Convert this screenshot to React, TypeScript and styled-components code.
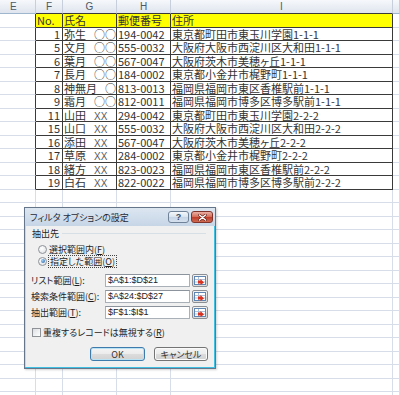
import React, { FC } from 'react';
import styled, { createGlobalStyle } from 'styled-components';

const JP = `'Noto Sans CJK JP', 'Noto Sans', sans-serif`;
const GRID = '#d8dee9';
const INK = '#3a3a3a';
const TEXT = '#333';

const GlobalStyle = createGlobalStyle`
  html, body {
    margin: 0;
    padding: 0;
    background: #fff;
  }
  body {
    overflow: hidden;
  }
`;

const Screen = styled.div`
  position: relative;
  width: 400px;
  height: 395px;
  overflow: hidden;
  background: #fff;
  font-family: ${JP};
  font-feature-settings: 'palt';
`;

/* ---------- sheet ---------- */

const Sheet = styled.div`
  display: flex;
  flex-direction: column;
`;

const SheetRow = styled.div<{ $h: number }>`
  display: grid;
  grid-template-columns: 36px 27px 54px 54px 222px 1fr;
  height: ${p => p.$h}px;
  line-height: ${p => p.$h - 1}px;
  flex: none;
`;

const ColHead = styled.div<{ $boxed?: boolean; $left?: boolean }>`
  box-sizing: border-box;
  border-right: 1px solid #c6cfdb;
  border-bottom: 1px solid ${p => (p.$boxed ? INK : '#9eb6ce')};
  background: linear-gradient(#f6f8fb, #dfe5ee);
  color: #4d5866;
  font-family: 'Liberation Sans', sans-serif;
  font-size: 10px;
  line-height: 13px;
  text-align: ${p => (p.$left ? 'left' : 'center')};
  padding-left: ${p => (p.$left ? '10px' : '0')};
`;

type Tone = 'grid' | 'box' | 'edge';

const Cell = styled.div<{ $tone: Tone; $fill?: boolean; $right?: boolean }>`
  box-sizing: border-box;
  overflow: hidden;
  white-space: nowrap;
  padding: 0 2px 0 1px;
  border-right: 1px solid ${p => (p.$tone === 'grid' ? GRID : INK)};
  border-bottom: 1px solid ${p => (p.$tone === 'box' ? INK : GRID)};
  background: ${p => (p.$fill ? '#ffff00' : 'transparent')};
  color: ${TEXT};
  font-size: 11px;
  text-align: ${p => (p.$right ? 'right' : 'left')};
`;

const Mark = styled.span<{ $latin?: boolean }>`
  margin-left: 8px;
  color: ${p => (p.$latin ? '#5a5a5a' : TEXT)};
  font-family: ${p => (p.$latin ? `'Liberation Sans', sans-serif` : JP)};
  font-size: ${p => (p.$latin ? '10px' : '11px')};
`;

/* ---------- dialog ---------- */

const Dialog = styled.div`
  position: absolute;
  left: 24px;
  top: 207px;
  width: 192px;
  height: 162px;
  box-sizing: border-box;
  display: flex;
  flex-direction: column;
  border: 1px solid #66768a;
  background: #f0f0f0;
  box-shadow: inset -1px -1px 0 #3fc0e3, inset 1px 0 0 #c9d7e6, 1px 1px 2px rgba(0, 0, 0, 0.18);
  color: #1e1e1e;
  font-size: 9px;
`;

const TitleBar = styled.div`
  flex: none;
  height: 18px;
  display: flex;
  align-items: center;
  gap: 2px;
  padding: 0 2px 0 5px;
  background: linear-gradient(#dce6f1, #c6d5e6);
`;

const Title = styled.span`
  flex: 1;
  color: #1f2b3a;
  font-size: 9px;
`;

const CapButton = styled.div<{ $close?: boolean }>`
  box-sizing: border-box;
  width: ${p => (p.$close ? 22 : 21)}px;
  height: 12px;
  display: flex;
  align-items: center;
  justify-content: center;
  border: 1px solid ${p => (p.$close ? '#80332a' : '#6f8298')};
  border-radius: 3px;
  background: ${p =>
    p.$close
      ? 'linear-gradient(#eab0a4, #d56a55 50%, #bd3b2a 51%, #cf6a50)'
      : 'linear-gradient(#f4f7fb, #d9e3ef 50%, #c5d4e6 51%, #d5e0ed)'};
  color: #3a4b5f;
  font-family: 'Liberation Sans', sans-serif;
  font-size: 9px;
  font-weight: bold;
`;

const Body = styled.div`
  flex: 1;
  display: flex;
  flex-direction: column;
  padding: 0 6px;
`;

const GroupLabel = styled.div`
  margin-top: 1px;
  height: 13px;
  display: flex;
  align-items: center;
  gap: 3px;
  padding-left: 1px;

  &::after {
    content: '';
    flex: 1;
    margin-right: 3px;
    border-top: 1px solid #d6dfe6;
  }
`;

const RadioRow = styled.label<{ $gap: number }>`
  margin-top: ${p => p.$gap}px;
  height: 12px;
  display: flex;
  align-items: center;
  gap: 2px;
  padding-left: 7px;
`;

const RadioDot = styled.span<{ $on?: boolean }>`
  box-sizing: border-box;
  width: 9px;
  height: 9px;
  display: flex;
  align-items: center;
  justify-content: center;
  border: 1px solid #8e9297;
  border-radius: 50%;
  background: radial-gradient(circle at 40% 35%, #ffffff, #d9dcdf);

  &::after {
    content: '';
    display: ${p => (p.$on ? 'block' : 'none')};
    width: 4px;
    height: 4px;
    border-radius: 50%;
    background: radial-gradient(circle at 35% 35%, #9fd0f5, #1f5fa8);
  }
`;

const Focus = styled.span`
  outline: 1px dotted #444;
  padding: 0 1px;
  line-height: 11px;
`;

const FieldRow = styled.div<{ $gap: number }>`
  margin-top: ${p => p.$gap}px;
  height: 13px;
  display: grid;
  grid-template-columns: 72px 85px 16px;
  column-gap: 2px;
  align-items: center;
`;

const Input = styled.div`
  box-sizing: border-box;
  height: 13px;
  padding-left: 2px;
  border: 1px solid #a9b0b8;
  border-top-color: #8c939c;
  background: #fff;
  color: #222;
  font-family: 'Liberation Sans', sans-serif;
  font-size: 9px;
  line-height: 11px;
`;

const RangeButton = styled.div`
  box-sizing: border-box;
  height: 13px;
  display: flex;
  align-items: center;
  justify-content: center;
  border: 1px solid #8b8f94;
  border-radius: 2px;
  background: linear-gradient(#f5f5f5, #e2e2e2 50%, #d4d4d4 51%, #dedede);
`;

const CheckRow = styled.label`
  margin-top: 7px;
  height: 12px;
  display: flex;
  align-items: center;
  gap: 2px;
  padding-left: 1px;
`;

const CheckBox = styled.span`
  box-sizing: border-box;
  width: 9px;
  height: 9px;
  border: 1px solid #8f9398;
  background: linear-gradient(135deg, #dcdfe2, #ffffff);
`;

const ButtonRow = styled.div`
  margin-top: 9px;
  display: flex;
  justify-content: flex-end;
  gap: 9px;
  padding-right: 1px;
`;

const PushButton = styled.div<{ $w: number; $default?: boolean }>`
  box-sizing: border-box;
  width: ${p => p.$w}px;
  height: 14px;
  display: flex;
  align-items: center;
  justify-content: center;
  border: 1px solid ${p => (p.$default ? '#3d7bad' : '#747474')};
  border-radius: 3px;
  background: linear-gradient(#f4f4f4, #ebebeb 50%, #dcdcdc 51%, #d2d2d2);
  box-shadow: ${p => (p.$default ? 'inset 0 0 0 1px #b9e2f5' : 'inset 0 0 0 1px #fafafa')};
  color: #333;
  font-size: 9px;
`;

/* ---------- data ---------- */

type Person = [string, string, string, string, string];

const people: Person[] = [
  ['1', '弥生', '○○', '194-0042', '東京都町田市東玉川学園1-1-1'],
  ['5', '文月', '○○', '555-0032', '大阪府大阪市西淀川区大和田1-1-1'],
  ['6', '葉月', '○○', '567-0047', '大阪府茨木市美穂ヶ丘1-1-1'],
  ['7', '長月', '○○', '184-0002', '東京都小金井市梶野町1-1-1'],
  ['8', '神無月', '○', '813-0013', '福岡県福岡市東区香椎駅前1-1-1'],
  ['9', '霜月', '○○', '812-0011', '福岡県福岡市博多区博多駅前1-1-1'],
  ['11', '山田', 'XX', '294-0042', '東京都町田市東玉川学園2-2-2'],
  ['15', '山口', 'XX', '555-0032', '大阪府大阪市西淀川区大和田2-2-2'],
  ['16', '添田', 'XX', '567-0047', '大阪府茨木市美穂ヶ丘2-2-2'],
  ['17', '草原', 'XX', '284-0002', '東京都小金井市梶野町2-2-2'],
  ['18', '緒方', 'XX', '823-0023', '福岡県福岡市東区香椎駅前2-2-2'],
  ['19', '白石', 'XX', '822-0022', '福岡県福岡市博多区博多駅前2-2-2'],
];

const BLANK_ROWS = 16;
const rowHeight = (i: number): number => (i % 2 === 0 ? 14 : 13);

const RangeIcon: FC = () => (
  <svg width="12" height="9" viewBox="0 0 12 9">
    <rect x="0.5" y="0.5" width="11" height="8" fill="#fff" stroke="#5f86b3" />
    <path d="M1 3.5h10M1 6h10M4.5 1v7" stroke="#a9bfda" strokeWidth="1" />
    <path d="M4 3.5l3.5 3.5v-1.6h2.5v-2.8h-2.5v-1.6z" fill="#d8321f" transform="rotate(180 7 5)" />
  </svg>
);

const CloseGlyph: FC = () => (
  <svg width="9" height="7" viewBox="0 0 9 7">
    <path d="M1.5 1l6 5M7.5 1l-6 5" stroke="#5a1a12" strokeWidth="2.6" strokeLinecap="round" />
    <path d="M1.5 1l6 5M7.5 1l-6 5" stroke="#fff" strokeWidth="1.5" strokeLinecap="round" />
  </svg>
);

const App: FC = () => {
  return (
    <Screen>
      <GlobalStyle />
      <Sheet>
        <SheetRow $h={14}>
          <ColHead $left>E</ColHead>
          <ColHead $boxed>F</ColHead>
          <ColHead $boxed>G</ColHead>
          <ColHead $boxed>H</ColHead>
          <ColHead $boxed>I</ColHead>
          <ColHead />
        </SheetRow>

        <SheetRow $h={rowHeight(0)}>
          <Cell $tone='edge' />
          <Cell $tone='box' $fill>No.</Cell>
          <Cell $tone='box' $fill>氏名</Cell>
          <Cell $tone='box' $fill>郵便番号</Cell>
          <Cell $tone='box' $fill>住所</Cell>
          <Cell $tone='grid' />
        </SheetRow>

        {people.map(([no, name, mark, zip, address], i) => (
          <SheetRow key={`row-${no}`} $h={rowHeight(i + 1)}>
            <Cell $tone='edge' />
            <Cell $tone='box' $right>{no}</Cell>
            <Cell $tone='box'>
              {name}
              <Mark $latin={mark === 'XX'}>{mark}</Mark>
            </Cell>
            <Cell $tone='box'>{zip}</Cell>
            <Cell $tone='box'>{address}</Cell>
            <Cell $tone='grid' />
          </SheetRow>
        ))}

        {Array.from({ length: BLANK_ROWS }, (_, i) => (
          <SheetRow key={`blank-${i}`} $h={rowHeight(i + people.length + 1)}>
            {Array.from({ length: 6 }, (__, c) => (
              <Cell key={c} $tone='grid' />
            ))}
          </SheetRow>
        ))}
      </Sheet>

      <Dialog>
        <TitleBar>
          <Title>フィルタ オプションの設定</Title>
          <CapButton>?</CapButton>
          <CapButton $close>
            <CloseGlyph />
          </CapButton>
        </TitleBar>

        <Body>
          <GroupLabel>抽出先</GroupLabel>
          <RadioRow $gap={3}>
            <RadioDot />
            <span>選択範囲内(<u>F</u>)</span>
          </RadioRow>
          <RadioRow $gap={0}>
            <RadioDot $on />
            <Focus>指定した範囲(<u>O</u>)</Focus>
          </RadioRow>

          <FieldRow $gap={7}>
            <span>リスト範囲(<u>L</u>):</span>
            <Input>$A$1:$D$21</Input>
            <RangeButton><RangeIcon /></RangeButton>
          </FieldRow>
          <FieldRow $gap={3}>
            <span>検索条件範囲(<u>C</u>):</span>
            <Input>$A$24:$D$27</Input>
            <RangeButton><RangeIcon /></RangeButton>
          </FieldRow>
          <FieldRow $gap={3}>
            <span>抽出範囲(<u>T</u>):</span>
            <Input>$F$1:$I$1</Input>
            <RangeButton><RangeIcon /></RangeButton>
          </FieldRow>

          <CheckRow>
            <CheckBox />
            <span>重複するレコードは無視する(<u>R</u>)</span>
          </CheckRow>

          <ButtonRow>
            <PushButton $w={55} $default>OK</PushButton>
            <PushButton $w={54}>キャンセル</PushButton>
          </ButtonRow>
        </Body>
      </Dialog>
    </Screen>
  );
};

export default App;
